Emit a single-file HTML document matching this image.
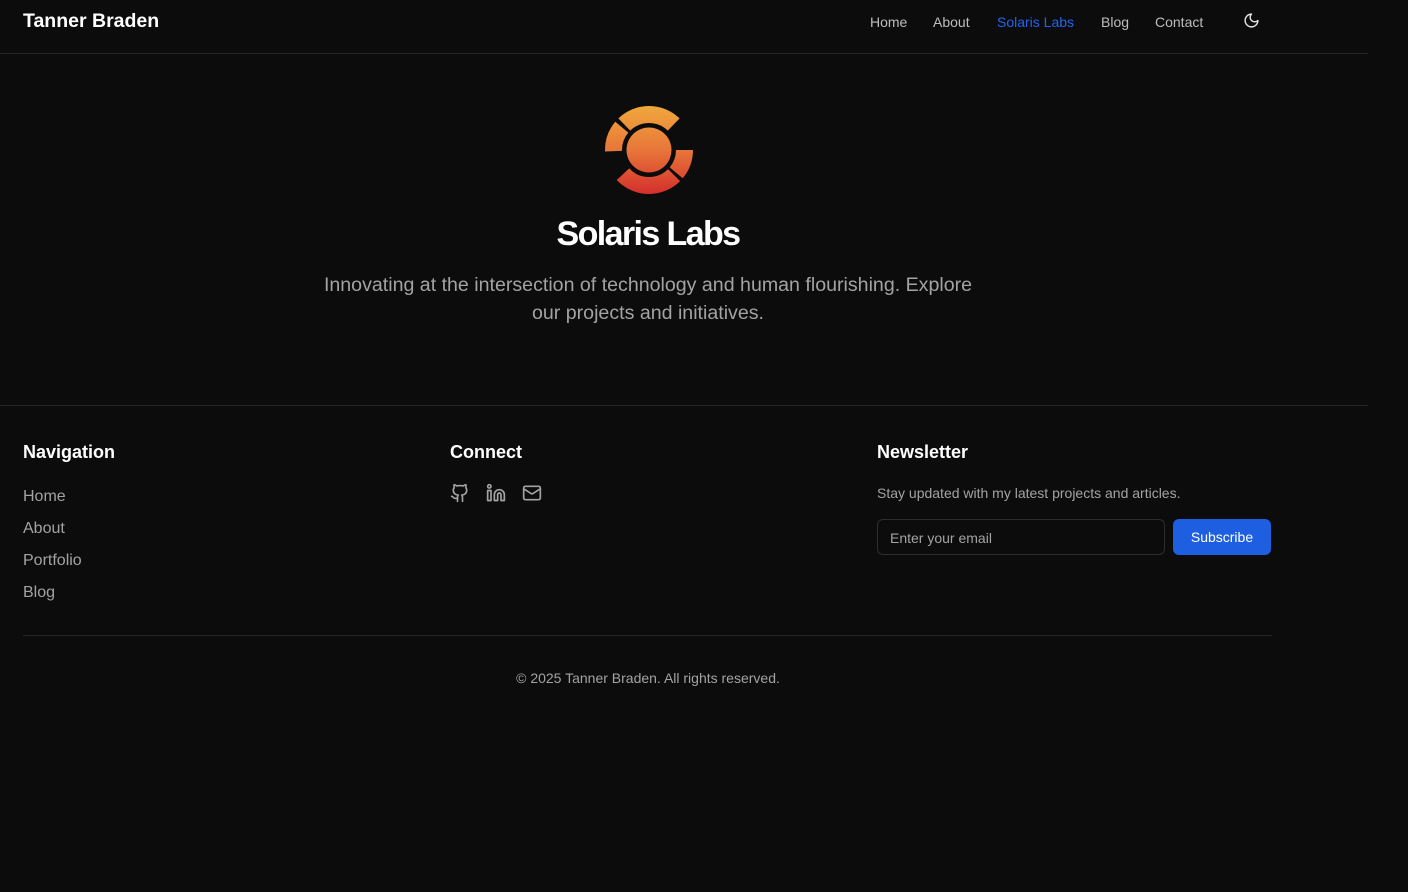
<!DOCTYPE html>
<html><head><meta charset="utf-8"><style>
*{margin:0;padding:0;box-sizing:border-box}
html,body{width:1408px;height:892px;background:#0c0c0c;font-family:"Liberation Sans",sans-serif;color:#e5e5e5;overflow:hidden}
.wrap{width:1368px;position:relative;height:892px}
header{height:54px;border-bottom:1px solid #262626;position:relative}
.brand{position:absolute;left:23px;top:10px;font-size:19.5px;font-weight:bold;color:#fff}
nav{position:absolute;top:14px;font-size:14px;color:#bdbdbd}
nav span{position:absolute;white-space:nowrap}
.hero{text-align:center;position:relative;height:352px;border-bottom:1px solid #262626}
.hero svg{position:absolute;left:598.5px;top:46px}
.hero h1{position:absolute;left:0;width:1296px;top:161px;font-size:34px;letter-spacing:-1.6px;color:#fff}
.hero p{position:absolute;left:313px;width:670px;top:217px;font-size:19.6px;line-height:28px;color:#a3a3a3}
.col h3{position:absolute;top:442px;font-size:18px;color:#fff}
.nl{position:absolute;left:23px;font-size:16px;color:#a3a3a3}
.hr{position:absolute;left:23px;width:1249px;top:635px;border-top:1px solid #262626}
</style></head><body><div class="wrap">
<header><div class="brand">Tanner Braden</div>
<nav><span style="left:870px">Home</span><span style="left:933px">About</span><span style="left:997px;color:#2563eb">Solaris Labs</span><span style="left:1101px">Blog</span><span style="left:1155px">Contact</span></nav>
<svg style="position:absolute;left:1243px;top:12px" width="17" height="17" viewBox="0 0 24 24" fill="none" stroke="#e5e5e5" stroke-width="2" stroke-linecap="round" stroke-linejoin="round"><path d="M12 3a6 6 0 0 0 9 9 9 9 0 1 1-9-9Z"/></svg>
</header>
<div class="hero">
<svg width="100" height="100" viewBox="0 0 100 100"><defs><linearGradient id="g" gradientUnits="userSpaceOnUse" x1="0" y1="6" x2="0" y2="94"><stop offset="0" stop-color="#f0a83c"/><stop offset=".5" stop-color="#e8763a"/><stop offset="1" stop-color="#d42f2c"/></linearGradient></defs>
<g fill="none" stroke="url(#g)" stroke-width="17">
<path d="M25.3 24.5 A35.5 35.5 0 0 1 74.7 24.5"/>
<path d="M14.5 51.2 A35.5 35.5 0 0 1 22.8 27.2"/>
<path d="M85.5 50 A35.5 35.5 0 0 1 77.2 72.8"/>
<path d="M75.1 75.1 A35.5 35.5 0 0 1 24 74.2"/>
</g>
<circle cx="50" cy="50" r="22.5" fill="url(#g)"/></svg>
<h1>Solaris Labs</h1>
<p>Innovating at the intersection of technology and human flourishing. Explore our projects and initiatives.</p>
</div>
<div class="col"><h3 style="left:23px">Navigation</h3><h3 style="left:450px">Connect</h3><h3 style="left:877px">Newsletter</h3></div>
<div class="nl" style="top:488px">Home</div><div class="nl" style="top:520px">About</div><div class="nl" style="top:552px">Portfolio</div><div class="nl" style="top:584px">Blog</div>
<svg style="position:absolute;left:450px;top:483px" width="20" height="20" viewBox="0 0 24 24" fill="none" stroke="#a3a3a3" stroke-width="2" stroke-linecap="round" stroke-linejoin="round"><path d="M15 22v-4a4.8 4.8 0 0 0-1-3.5c3 0 6-2 6-5.5.08-1.25-.27-2.48-1-3.5.28-1.15.28-2.35 0-3.5 0 0-1 0-3 1.5-2.64-.5-5.36-.5-8 0C6 2 5 2 5 2c-.3 1.15-.3 2.35 0 3.5A5.4 5.4 0 0 0 4 9c0 3.5 3 5.5 6 5.5-.39.49-.68 1.05-.85 1.65-.17.6-.22 1.23-.15 1.85v4"/><path d="M9 18c-4.51 2-5-2-7-2"/></svg>
<svg style="position:absolute;left:486px;top:483px" width="20" height="20" viewBox="0 0 24 24" fill="none" stroke="#a3a3a3" stroke-width="2" stroke-linecap="round" stroke-linejoin="round"><path d="M16 8a6 6 0 0 1 6 6v7h-4v-7a2 2 0 0 0-4 0v7h-4v-7a6 6 0 0 1 6-6z"/><rect x="2" y="9" width="4" height="12"/><circle cx="4" cy="4" r="2"/></svg>
<svg style="position:absolute;left:522px;top:483px" width="20" height="20" viewBox="0 0 24 24" fill="none" stroke="#a3a3a3" stroke-width="2" stroke-linecap="round" stroke-linejoin="round"><rect x="2" y="4" width="20" height="16" rx="2"/><path d="m22 7-8.97 5.7a1.94 1.94 0 0 1-2.06 0L2 7"/></svg>
<div style="position:absolute;left:877px;top:485px;font-size:14px;color:#a3a3a3">Stay updated with my latest projects and articles.</div>
<div style="position:absolute;left:877px;top:519px;width:288px;height:36px;border:1px solid #2e2e2e;border-radius:6px;background:#0c0c0c;font-size:14px;color:#a3a3a3;padding:10px 12px">Enter your email</div>
<div style="position:absolute;left:1173px;top:519px;width:98px;height:36px;border-radius:6px;background:#1d5fe0;color:#fff;font-size:14px;text-align:center;line-height:36px">Subscribe</div>
<div class="hr"></div>
<div style="position:absolute;left:0;width:1296px;top:670px;text-align:center;font-size:14px;color:#a3a3a3">© 2025 Tanner Braden. All rights reserved.</div>
</div></body></html>
